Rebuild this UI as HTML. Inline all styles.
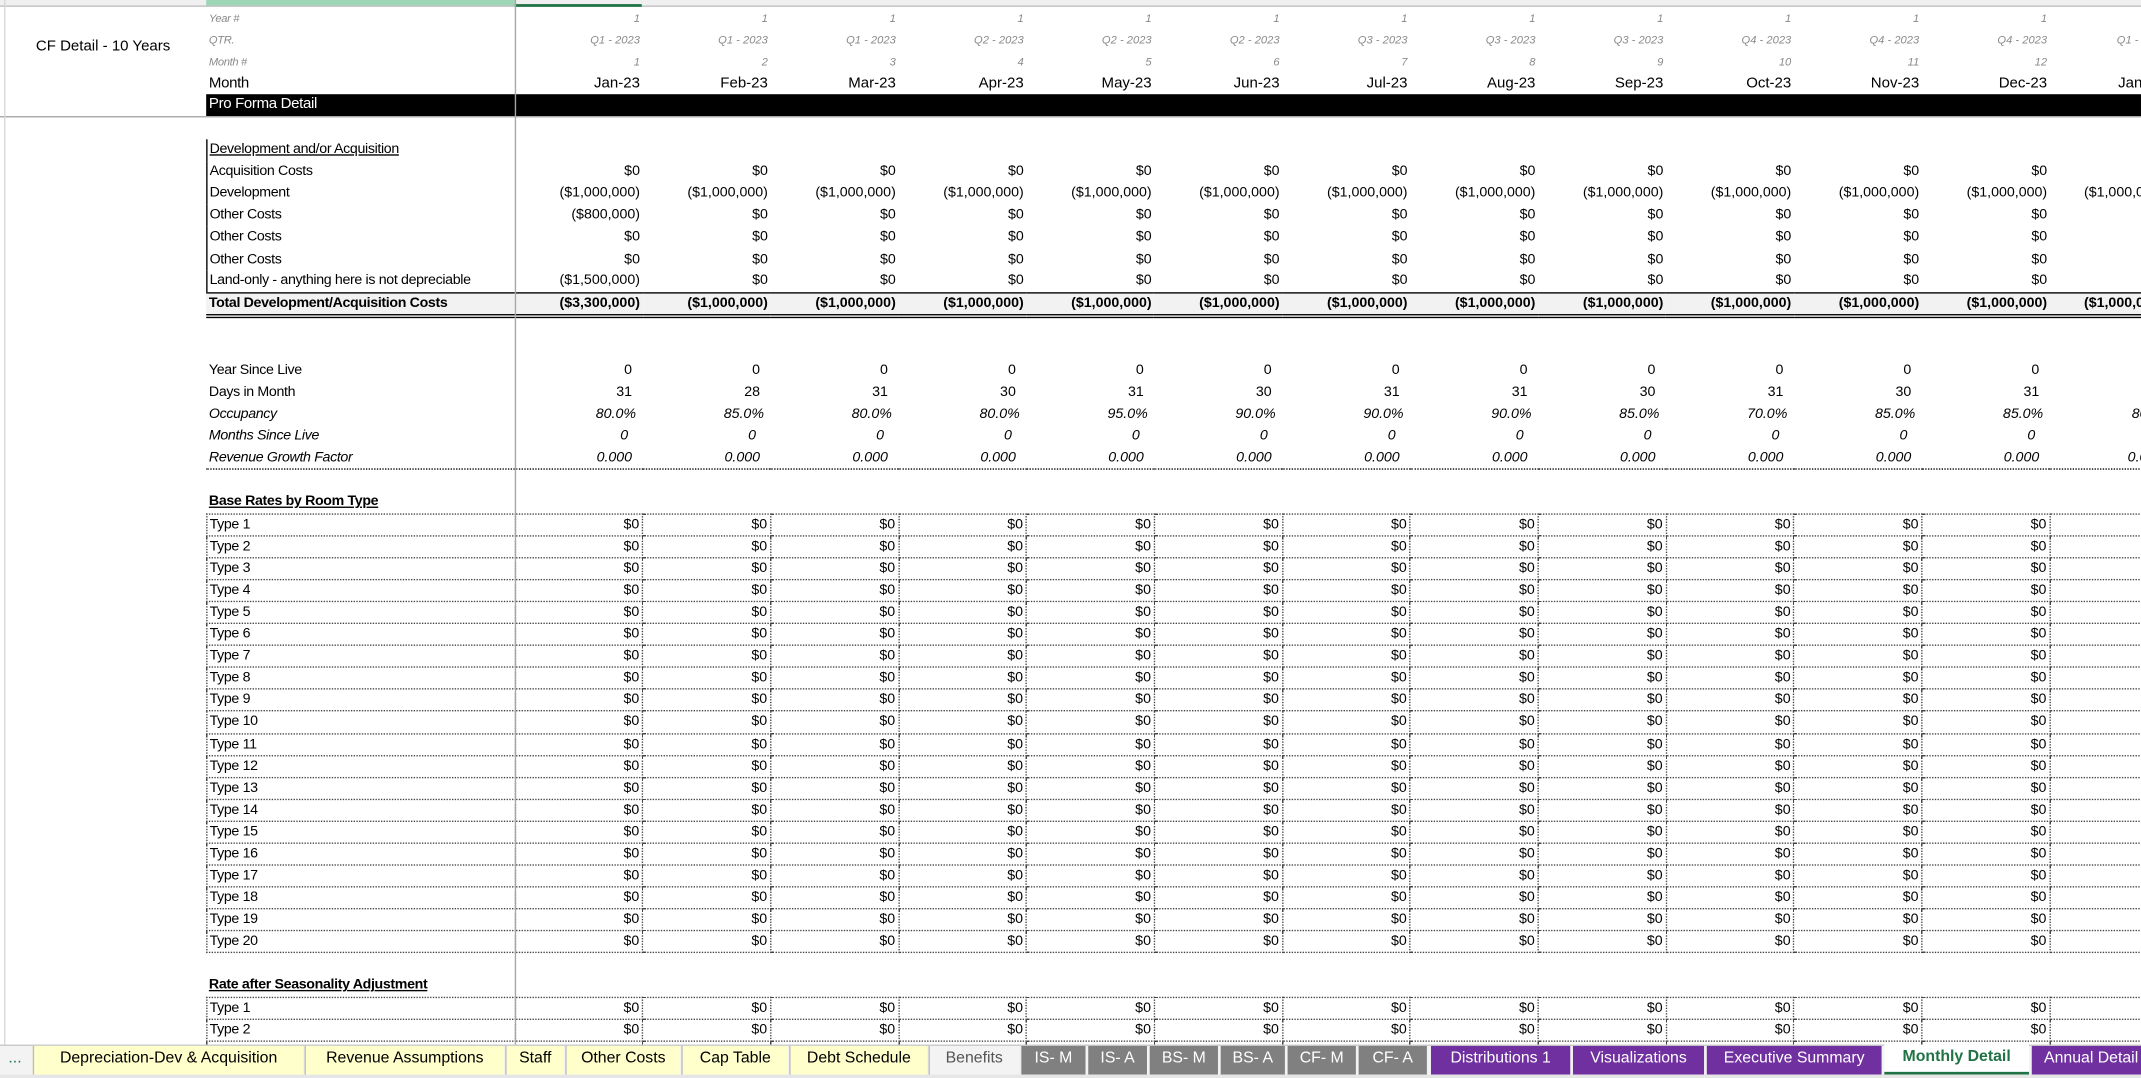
<!DOCTYPE html>
<html><head><meta charset="utf-8"><style>
html,body{margin:0;padding:0;background:#fff;overflow:hidden}
#vp{width:2141px;height:1078px;overflow:hidden;position:relative}
#w{position:absolute;left:0;top:0;width:1568px;height:789.5px;transform:scale(1.36543);transform-origin:0 0;overflow:hidden;font-family:"Liberation Sans",sans-serif;color:#000}
table{position:absolute;left:0;top:5px;border-collapse:collapse;table-layout:fixed;width:1595px}
td{height:16.1px;padding:0 2px;white-space:nowrap;overflow:hidden;font-size:10.4px;text-align:right;line-height:15px;box-sizing:border-box}
td.l{text-align:left;letter-spacing:-0.25px}
tr.g td{color:#8a8a8a;font-style:italic;font-size:8.2px}
tr.m td{font-size:11px}
tr.i td{font-style:italic}
tr.dv td.l{border-left:1px solid #000}
tr.t td+td{background:#f2f2f2;font-weight:bold;border-top:1px solid #000;border-bottom:3px double #000}
tr.rg td+td{border-bottom:1px dotted #000}
tr.d td+td{border:1px dotted #444}
tr.d td:last-child{border-right:none}
.hd{font-weight:bold;text-decoration:underline}
.tabs{position:absolute;left:0;top:765px;width:1568px;height:22px;background:#f3f3f3;border-top:1px solid #c8c8c8}
.tb{position:absolute;top:0;height:21px;line-height:18px;font-size:11.6px;text-align:center;white-space:nowrap;overflow:hidden;box-sizing:border-box}
.y{background:#ffffcc;color:#000}
.gr{background:#808080;color:#fff}
.p{background:#7030a0;color:#fff}
</style></head><body><div id="vp"><div id="w">
<div style="position:absolute;left:0;top:0;width:1568px;height:4px;background:#f0f0f0;border-bottom:1px solid #c0c0c0"></div>
<div style="position:absolute;left:151px;top:0;width:226px;height:4px;background:#9fd5b7"></div>
<div style="position:absolute;left:377px;top:3px;width:93px;height:2px;background:#217346"></div>
<div style="position:absolute;left:0;top:28px;width:151px;text-align:center;font-size:11px">CF Detail - 10 Years</div>
<table>
<colgroup><col style="width:151px"><col style="width:226px"><col style="width:93.7px"><col style="width:93.7px"><col style="width:93.7px"><col style="width:93.7px"><col style="width:93.7px"><col style="width:93.7px"><col style="width:93.7px"><col style="width:93.7px"><col style="width:93.7px"><col style="width:93.7px"><col style="width:93.7px"><col style="width:93.7px"><col style="width:93.7px"></colgroup>
<tr class="g"><td></td><td class="l">Year #</td><td>1</td><td>1</td><td>1</td><td>1</td><td>1</td><td>1</td><td>1</td><td>1</td><td>1</td><td>1</td><td>1</td><td>1</td><td>2</td></tr>
<tr class="g"><td></td><td class="l">QTR.</td><td>Q1 - 2023</td><td>Q1 - 2023</td><td>Q1 - 2023</td><td>Q2 - 2023</td><td>Q2 - 2023</td><td>Q2 - 2023</td><td>Q3 - 2023</td><td>Q3 - 2023</td><td>Q3 - 2023</td><td>Q4 - 2023</td><td>Q4 - 2023</td><td>Q4 - 2023</td><td style="text-align:left;padding-left:49px">Q1 - 2024</td></tr>
<tr class="g"><td></td><td class="l">Month #</td><td>1</td><td>2</td><td>3</td><td>4</td><td>5</td><td>6</td><td>7</td><td>8</td><td>9</td><td>10</td><td>11</td><td>12</td><td>13</td></tr>
<tr class="m"><td></td><td class="l">Month</td><td>Jan-23</td><td>Feb-23</td><td>Mar-23</td><td>Apr-23</td><td>May-23</td><td>Jun-23</td><td>Jul-23</td><td>Aug-23</td><td>Sep-23</td><td>Oct-23</td><td>Nov-23</td><td>Dec-23</td><td style="text-align:left;padding-left:50px">Jan-24</td></tr>
<tr class="m"><td></td><td class="l"></td><td></td><td></td><td></td><td></td><td></td><td></td><td></td><td></td><td></td><td></td><td></td><td></td><td></td></tr>
<tr><td></td><td></td><td colspan="13"></td></tr>
<tr class="dv"><td></td><td class="l" style="text-decoration:underline">Development and/or Acquisition</td><td colspan="13"></td></tr>
<tr class="dv"><td></td><td class="l">Acquisition Costs</td><td>$0</td><td>$0</td><td>$0</td><td>$0</td><td>$0</td><td>$0</td><td>$0</td><td>$0</td><td>$0</td><td>$0</td><td>$0</td><td>$0</td><td></td></tr>
<tr class="dv"><td></td><td class="l">Development</td><td>($1,000,000)</td><td>($1,000,000)</td><td>($1,000,000)</td><td>($1,000,000)</td><td>($1,000,000)</td><td>($1,000,000)</td><td>($1,000,000)</td><td>($1,000,000)</td><td>($1,000,000)</td><td>($1,000,000)</td><td>($1,000,000)</td><td>($1,000,000)</td><td style="text-align:left;padding-left:25px">($1,000,000)</td></tr>
<tr class="dv"><td></td><td class="l">Other Costs</td><td>($800,000)</td><td>$0</td><td>$0</td><td>$0</td><td>$0</td><td>$0</td><td>$0</td><td>$0</td><td>$0</td><td>$0</td><td>$0</td><td>$0</td><td></td></tr>
<tr class="dv"><td></td><td class="l">Other Costs</td><td>$0</td><td>$0</td><td>$0</td><td>$0</td><td>$0</td><td>$0</td><td>$0</td><td>$0</td><td>$0</td><td>$0</td><td>$0</td><td>$0</td><td></td></tr>
<tr class="dv"><td></td><td class="l">Other Costs</td><td>$0</td><td>$0</td><td>$0</td><td>$0</td><td>$0</td><td>$0</td><td>$0</td><td>$0</td><td>$0</td><td>$0</td><td>$0</td><td>$0</td><td></td></tr>
<tr class="dv"><td></td><td class="l">Land-only - anything here is not depreciable</td><td>($1,500,000)</td><td>$0</td><td>$0</td><td>$0</td><td>$0</td><td>$0</td><td>$0</td><td>$0</td><td>$0</td><td>$0</td><td>$0</td><td>$0</td><td></td></tr>
<tr class="t"><td></td><td class="l">Total Development/Acquisition Costs</td><td>($3,300,000)</td><td>($1,000,000)</td><td>($1,000,000)</td><td>($1,000,000)</td><td>($1,000,000)</td><td>($1,000,000)</td><td>($1,000,000)</td><td>($1,000,000)</td><td>($1,000,000)</td><td>($1,000,000)</td><td>($1,000,000)</td><td>($1,000,000)</td><td style="text-align:left;padding-left:25px">($1,000,000)</td></tr>
<tr><td></td><td></td><td colspan="13"></td></tr>
<tr><td></td><td></td><td colspan="13"></td></tr>
<tr><td></td><td class="l">Year Since Live</td><td>0&nbsp;&nbsp;</td><td>0&nbsp;&nbsp;</td><td>0&nbsp;&nbsp;</td><td>0&nbsp;&nbsp;</td><td>0&nbsp;&nbsp;</td><td>0&nbsp;&nbsp;</td><td>0&nbsp;&nbsp;</td><td>0&nbsp;&nbsp;</td><td>0&nbsp;&nbsp;</td><td>0&nbsp;&nbsp;</td><td>0&nbsp;&nbsp;</td><td>0&nbsp;&nbsp;</td><td></td></tr>
<tr><td></td><td class="l">Days in Month</td><td>31&nbsp;&nbsp;</td><td>28&nbsp;&nbsp;</td><td>31&nbsp;&nbsp;</td><td>30&nbsp;&nbsp;</td><td>31&nbsp;&nbsp;</td><td>30&nbsp;&nbsp;</td><td>31&nbsp;&nbsp;</td><td>31&nbsp;&nbsp;</td><td>30&nbsp;&nbsp;</td><td>31&nbsp;&nbsp;</td><td>30&nbsp;&nbsp;</td><td>31&nbsp;&nbsp;</td><td></td></tr>
<tr class="i"><td></td><td class="l">Occupancy</td><td>80.0%&nbsp;</td><td>85.0%&nbsp;</td><td>80.0%&nbsp;</td><td>80.0%&nbsp;</td><td>95.0%&nbsp;</td><td>90.0%&nbsp;</td><td>90.0%&nbsp;</td><td>90.0%&nbsp;</td><td>85.0%&nbsp;</td><td>70.0%&nbsp;</td><td>85.0%&nbsp;</td><td>85.0%&nbsp;</td><td style="text-align:left;padding-left:60px">80.0%</td></tr>
<tr class="i"><td></td><td class="l">Months Since Live</td><td>0&nbsp;&nbsp;&nbsp;</td><td>0&nbsp;&nbsp;&nbsp;</td><td>0&nbsp;&nbsp;&nbsp;</td><td>0&nbsp;&nbsp;&nbsp;</td><td>0&nbsp;&nbsp;&nbsp;</td><td>0&nbsp;&nbsp;&nbsp;</td><td>0&nbsp;&nbsp;&nbsp;</td><td>0&nbsp;&nbsp;&nbsp;</td><td>0&nbsp;&nbsp;&nbsp;</td><td>0&nbsp;&nbsp;&nbsp;</td><td>0&nbsp;&nbsp;&nbsp;</td><td>0&nbsp;&nbsp;&nbsp;</td><td></td></tr>
<tr class="i rg"><td></td><td class="l">Revenue Growth Factor</td><td>0.000&nbsp;&nbsp;</td><td>0.000&nbsp;&nbsp;</td><td>0.000&nbsp;&nbsp;</td><td>0.000&nbsp;&nbsp;</td><td>0.000&nbsp;&nbsp;</td><td>0.000&nbsp;&nbsp;</td><td>0.000&nbsp;&nbsp;</td><td>0.000&nbsp;&nbsp;</td><td>0.000&nbsp;&nbsp;</td><td>0.000&nbsp;&nbsp;</td><td>0.000&nbsp;&nbsp;</td><td>0.000&nbsp;&nbsp;</td><td style="text-align:left;padding-left:57px">0.030</td></tr>
<tr><td></td><td></td><td colspan="13"></td></tr>
<tr><td></td><td class="l"><span class="hd">Base Rates by Room Type</span></td><td colspan="13"></td></tr>
<tr class="d"><td></td><td class="l">Type 1</td><td>$0</td><td>$0</td><td>$0</td><td>$0</td><td>$0</td><td>$0</td><td>$0</td><td>$0</td><td>$0</td><td>$0</td><td>$0</td><td>$0</td><td></td></tr>
<tr class="d"><td></td><td class="l">Type 2</td><td>$0</td><td>$0</td><td>$0</td><td>$0</td><td>$0</td><td>$0</td><td>$0</td><td>$0</td><td>$0</td><td>$0</td><td>$0</td><td>$0</td><td></td></tr>
<tr class="d"><td></td><td class="l">Type 3</td><td>$0</td><td>$0</td><td>$0</td><td>$0</td><td>$0</td><td>$0</td><td>$0</td><td>$0</td><td>$0</td><td>$0</td><td>$0</td><td>$0</td><td></td></tr>
<tr class="d"><td></td><td class="l">Type 4</td><td>$0</td><td>$0</td><td>$0</td><td>$0</td><td>$0</td><td>$0</td><td>$0</td><td>$0</td><td>$0</td><td>$0</td><td>$0</td><td>$0</td><td></td></tr>
<tr class="d"><td></td><td class="l">Type 5</td><td>$0</td><td>$0</td><td>$0</td><td>$0</td><td>$0</td><td>$0</td><td>$0</td><td>$0</td><td>$0</td><td>$0</td><td>$0</td><td>$0</td><td></td></tr>
<tr class="d"><td></td><td class="l">Type 6</td><td>$0</td><td>$0</td><td>$0</td><td>$0</td><td>$0</td><td>$0</td><td>$0</td><td>$0</td><td>$0</td><td>$0</td><td>$0</td><td>$0</td><td></td></tr>
<tr class="d"><td></td><td class="l">Type 7</td><td>$0</td><td>$0</td><td>$0</td><td>$0</td><td>$0</td><td>$0</td><td>$0</td><td>$0</td><td>$0</td><td>$0</td><td>$0</td><td>$0</td><td></td></tr>
<tr class="d"><td></td><td class="l">Type 8</td><td>$0</td><td>$0</td><td>$0</td><td>$0</td><td>$0</td><td>$0</td><td>$0</td><td>$0</td><td>$0</td><td>$0</td><td>$0</td><td>$0</td><td></td></tr>
<tr class="d"><td></td><td class="l">Type 9</td><td>$0</td><td>$0</td><td>$0</td><td>$0</td><td>$0</td><td>$0</td><td>$0</td><td>$0</td><td>$0</td><td>$0</td><td>$0</td><td>$0</td><td></td></tr>
<tr class="d"><td></td><td class="l">Type 10</td><td>$0</td><td>$0</td><td>$0</td><td>$0</td><td>$0</td><td>$0</td><td>$0</td><td>$0</td><td>$0</td><td>$0</td><td>$0</td><td>$0</td><td></td></tr>
<tr class="d"><td></td><td class="l">Type 11</td><td>$0</td><td>$0</td><td>$0</td><td>$0</td><td>$0</td><td>$0</td><td>$0</td><td>$0</td><td>$0</td><td>$0</td><td>$0</td><td>$0</td><td></td></tr>
<tr class="d"><td></td><td class="l">Type 12</td><td>$0</td><td>$0</td><td>$0</td><td>$0</td><td>$0</td><td>$0</td><td>$0</td><td>$0</td><td>$0</td><td>$0</td><td>$0</td><td>$0</td><td></td></tr>
<tr class="d"><td></td><td class="l">Type 13</td><td>$0</td><td>$0</td><td>$0</td><td>$0</td><td>$0</td><td>$0</td><td>$0</td><td>$0</td><td>$0</td><td>$0</td><td>$0</td><td>$0</td><td></td></tr>
<tr class="d"><td></td><td class="l">Type 14</td><td>$0</td><td>$0</td><td>$0</td><td>$0</td><td>$0</td><td>$0</td><td>$0</td><td>$0</td><td>$0</td><td>$0</td><td>$0</td><td>$0</td><td></td></tr>
<tr class="d"><td></td><td class="l">Type 15</td><td>$0</td><td>$0</td><td>$0</td><td>$0</td><td>$0</td><td>$0</td><td>$0</td><td>$0</td><td>$0</td><td>$0</td><td>$0</td><td>$0</td><td></td></tr>
<tr class="d"><td></td><td class="l">Type 16</td><td>$0</td><td>$0</td><td>$0</td><td>$0</td><td>$0</td><td>$0</td><td>$0</td><td>$0</td><td>$0</td><td>$0</td><td>$0</td><td>$0</td><td></td></tr>
<tr class="d"><td></td><td class="l">Type 17</td><td>$0</td><td>$0</td><td>$0</td><td>$0</td><td>$0</td><td>$0</td><td>$0</td><td>$0</td><td>$0</td><td>$0</td><td>$0</td><td>$0</td><td></td></tr>
<tr class="d"><td></td><td class="l">Type 18</td><td>$0</td><td>$0</td><td>$0</td><td>$0</td><td>$0</td><td>$0</td><td>$0</td><td>$0</td><td>$0</td><td>$0</td><td>$0</td><td>$0</td><td></td></tr>
<tr class="d"><td></td><td class="l">Type 19</td><td>$0</td><td>$0</td><td>$0</td><td>$0</td><td>$0</td><td>$0</td><td>$0</td><td>$0</td><td>$0</td><td>$0</td><td>$0</td><td>$0</td><td></td></tr>
<tr class="d"><td></td><td class="l">Type 20</td><td>$0</td><td>$0</td><td>$0</td><td>$0</td><td>$0</td><td>$0</td><td>$0</td><td>$0</td><td>$0</td><td>$0</td><td>$0</td><td>$0</td><td></td></tr>
<tr><td></td><td></td><td colspan="13"></td></tr>
<tr><td></td><td class="l"><span class="hd">Rate after Seasonality Adjustment</span></td><td colspan="13"></td></tr>
<tr class="d"><td></td><td class="l">Type 1</td><td>$0</td><td>$0</td><td>$0</td><td>$0</td><td>$0</td><td>$0</td><td>$0</td><td>$0</td><td>$0</td><td>$0</td><td>$0</td><td>$0</td><td></td></tr>
<tr class="d"><td></td><td class="l">Type 2</td><td>$0</td><td>$0</td><td>$0</td><td>$0</td><td>$0</td><td>$0</td><td>$0</td><td>$0</td><td>$0</td><td>$0</td><td>$0</td><td>$0</td><td></td></tr>
<tr class="d"><td></td><td class="l">Type 3</td><td>$0</td><td>$0</td><td>$0</td><td>$0</td><td>$0</td><td>$0</td><td>$0</td><td>$0</td><td>$0</td><td>$0</td><td>$0</td><td>$0</td><td></td></tr>
</table>
<div style="position:absolute;left:151px;top:69.4px;width:1417px;height:16.1px;background:#000;color:#fff;font-size:11px;line-height:15px;padding-left:2px;box-sizing:border-box;letter-spacing:-0.25px">Pro Forma Detail</div>
<div style="position:absolute;left:377px;top:0;width:1px;height:765px;background:#a6a6a6"></div>
<div style="position:absolute;left:0;top:85px;width:1568px;height:1px;background:#a6a6a6"></div>
<div style="position:absolute;left:0;top:0;width:3px;height:765px;border-right:1px solid #d8d8d8"></div>
<div class="tabs">
<span class="tb" style="left:0;width:22px;color:#217346">...</span>
<span class="tb y" style="left:24px;width:198px;border-left:1px solid #bbb">Depreciation-Dev &amp; Acquisition</span>
<span class="tb y" style="left:223px;width:146px;border-left:1px solid #bbb">Revenue Assumptions</span>
<span class="tb y" style="left:370px;width:43px;border-left:1px solid #bbb">Staff</span>
<span class="tb y" style="left:414px;width:84px;border-left:1px solid #bbb">Other Costs</span>
<span class="tb y" style="left:499px;width:78px;border-left:1px solid #bbb">Cap Table</span>
<span class="tb y" style="left:578px;width:101px;border-left:1px solid #bbb">Debt Schedule</span>
<span class="tb" style="left:680px;width:66px;border-left:1px solid #bbb;color:#555">Benefits</span>
<span class="tb gr" style="left:747px;width:48px;border-left:1px solid #eee">IS- M</span>
<span class="tb gr" style="left:797px;width:43px">IS- A</span>
<span class="tb gr" style="left:842px;width:50px">BS- M</span>
<span class="tb gr" style="left:894px;width:47px">BS- A</span>
<span class="tb gr" style="left:943px;width:50px">CF- M</span>
<span class="tb gr" style="left:995px;width:50px">CF- A</span>
<span class="tb p" style="left:1048px;width:102px">Distributions 1</span>
<span class="tb p" style="left:1152px;width:96px">Visualizations</span>
<span class="tb p" style="left:1250px;width:128px">Executive Summary</span>
<span class="tb" style="left:1380px;width:106px;background:#fff;color:#217346;font-weight:bold;border-bottom:2px solid #217346;height:22px;top:-1px">Monthly Detail</span>
<span class="tb p" style="left:1488px;width:90px;text-align:left;padding-left:9px">Annual Detail</span>
</div>
<div style="position:absolute;left:0;top:787px;width:1568px;height:3px;background:#e6e6e6"></div>
</div></div></body></html>
